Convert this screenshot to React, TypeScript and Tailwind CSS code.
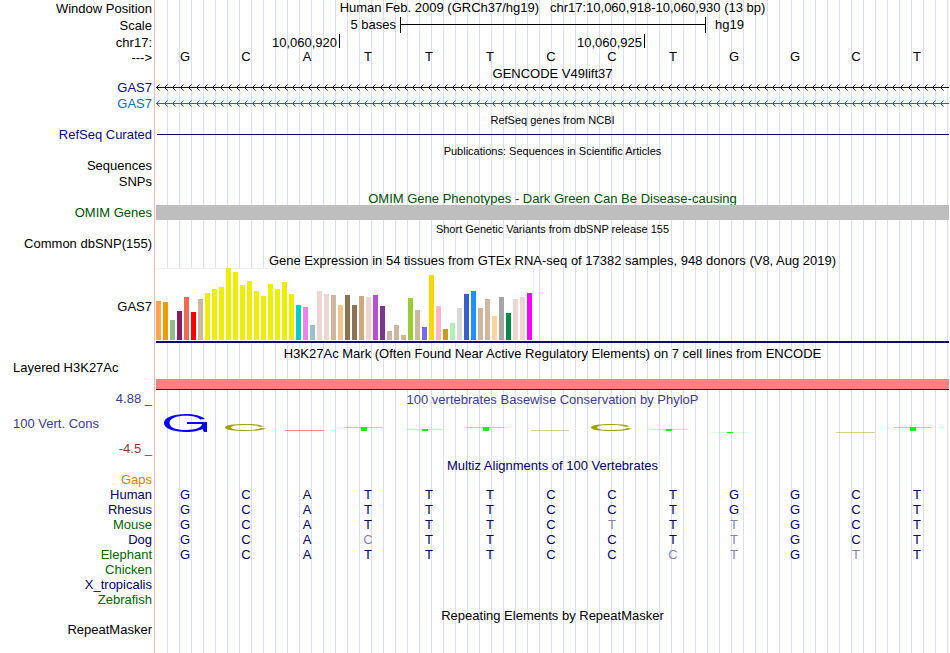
import React from "react";

type Children = { children?: React.ReactNode };

const TRACK_BG =
  "bg-[repeating-linear-gradient(to_right,transparent_0,transparent_11px,#dcdcff_11px,#dcdcff_12px)]";

function Row({
  label,
  labelClass = "",
  h,
  children,
}: Children & { label?: React.ReactNode; labelClass?: string; h: string }) {
  return (
    <div className={`flex ${h}`}>
      <div
        className={`w-[155px] shrink-0 border-r border-[#ffb4b4] pr-[2px] text-right whitespace-nowrap ${labelClass}`}
      >
        {label}
      </div>
      <div className={`mx-px min-w-0 flex-1 ${TRACK_BG}`}>{children}</div>
    </div>
  );
}

function Title({ children, className = "" }: Children & { className?: string }) {
  return <h2 className={`text-center whitespace-pre ${className}`}>{children}</h2>;
}

function Arrows({ id, color }: { id: string; color: string }) {
  return (
    <svg className="block h-4 w-full" shapeRendering="crispEdges" aria-hidden="true">
      <defs>
        <pattern id={id} width="8" height="16" patternUnits="userSpaceOnUse">
          <rect x="0" y="7" width="8" height="1" fill={color} />
          <rect x="1" y="6" width="1" height="1" fill={color} />
          <rect x="1" y="8" width="1" height="1" fill={color} />
          <rect x="2" y="5" width="1" height="1" fill={color} />
          <rect x="2" y="9" width="1" height="1" fill={color} />
          <rect x="3" y="4" width="1" height="1" fill={color} opacity="0.6" />
          <rect x="3" y="10" width="1" height="1" fill={color} opacity="0.6" />
        </pattern>
      </defs>
      <rect width="100%" height="16" fill={`url(#${id})`} />
    </svg>
  );
}

function Bases({ seq }: { seq: string }) {
  return (
    <div className="grid grid-cols-[repeat(13,minmax(0,1fr))] text-center">
      {seq.split("").map((c, i) => (
        <span
          key={i}
          className={`pr-[3px] ${c === c.toLowerCase() ? "text-[#8484b4]" : ""}`}
        >
          {c.toUpperCase()}
        </span>
      ))}
    </div>
  );
}

const TAN = "#cdb79e";
const PINK = "#eed5d2";
const YELLOW = "#eeee00";

const tissues: [number, string][] = [
  [39, "#ffa54f"], [38, "#ee9a00"], [20, "#8fbc8f"], [29, "#8b1c62"], [43, "#ee6a50"],
  [28, "#ff0000"], [41, TAN], [47, YELLOW], [51, YELLOW], [53, YELLOW], [72, YELLOW],
  [68, YELLOW], [55, YELLOW], [59, YELLOW], [49, YELLOW], [44, YELLOW], [56, YELLOW],
  [51, YELLOW], [58, YELLOW], [46, YELLOW], [35, "#00cdcd"], [33, "#ee82ee"],
  [15, "#9ac0cd"], [49, PINK], [46, PINK], [45, TAN], [35, "#eec591"], [45, "#8b7355"],
  [35, "#8b7355"], [44, "#cdaa7d"], [43, PINK], [45, "#b452cd"], [34, "#7a378b"],
  [9, TAN], [15, TAN], [5, TAN], [42, "#9acd32"], [30, TAN], [13, "#7a67ee"],
  [65, "#ffd700"], [34, "#ffb6c1"], [11, "#cd9b1d"], [17, "#b4eeb4"], [32, "#d9d9d9"],
  [46, "#3a5fcd"], [49, "#1e90ff"], [32, TAN], [41, TAN], [24, "#ffd39b"],
  [43, "#a6a6a6"], [27, "#008b45"], [41, PINK], [43, PINK], [47, "#ff00ff"],
];

function TissueChart() {
  return (
    <div className="border-b-2 border-[#0c0c78]">
      <div className="flex h-[73px] w-[378px] items-end gap-[2px] border-t border-r border-[#f0f0f0] bg-white pb-px">
        {tissues.map(([value, color], i) => (
          <div
            key={i}
            className="w-[5px] shrink-0"
            style={{ height: value, backgroundColor: color }}
          />
        ))}
      </div>
    </div>
  );
}

function OliveMark({ x }: { x: number }) {
  return (
    <path
      transform={`translate(${x} 0)`}
      fill="#a0a000"
      d="M39 20.5 C35 18.7 29 18 21 18 C9 18 0 19 0 21.5 C0 24 9 25 21 25 C29 25 37 24.3 41 22.5 L36 22 C34 23.3 28 24 21 24 C12 24 6 23.2 6 21.5 C6 19.8 12 19 21 19 C28 19 32 19.5 34 20.8 Z"
    />
  );
}

function GreenMark({ x, top, h, fade }: { x: number; top: number; h: number; fade: number }) {
  return (
    <g fill="#00ff00" shapeRendering="crispEdges">
      <rect x={x} y={top} width="37" height="1" opacity={fade} />
      <rect x={x + 16} y={top} width="6" height={h} />
    </g>
  );
}

function Conservation() {
  return (
    <svg
      className="block h-9 w-full"
      viewBox="0 0 793 36"
      preserveAspectRatio="none"
      role="img"
      aria-label="Basewise conservation"
    >
      <path
        fill="#0000ff"
        d="M49 13 C45 9.5 38 8 30 8 C17 8 8 11.5 8 17 C8 22.5 17 26 30 26 C38 26 44 24.5 46.5 23 L48 26 H51 V16 H31 V18 H46 C46 21 40 24 30 24 C20 24 13.5 21.5 13.5 17 C13.5 12.5 20 9.8 30 9.8 C37 9.8 42 11 44 13.5 Z"
      />
      <OliveMark x={69} />
      <rect x="129" y="24" width="39" height="1" fill="#ff0000" opacity="0.45" />
      <GreenMark x={189} top={21} h={4} fade={0.5} />
      <GreenMark x={250} top={23} h={2} fade={0.25} />
      <GreenMark x={311} top={21} h={4} fade={0.5} />
      <rect x="375" y="24" width="38" height="1" fill="#a0a000" opacity="0.45" />
      <OliveMark x={435} />
      <GreenMark x={494} top={23} h={2} fade={0.25} />
      <GreenMark x={555} top={26} h={1} fade={0.15} />
      <rect x="680" y="26" width="39" height="1" fill="#a0a000" opacity="0.45" />
      <GreenMark x={738} top={21} h={4} fade={0.5} />
    </svg>
  );
}

const species = [
  { name: "Human", color: "text-[#000064]", seq: "GCATTTCCTGGCT" },
  { name: "Rhesus", color: "text-[#000064]", seq: "GCATTTCCTGGCT" },
  { name: "Mouse", color: "text-[#006400]", seq: "GCATTTCtTtGCT" },
  { name: "Dog", color: "text-[#000064]", seq: "GCAcTTCCTtGCT" },
  { name: "Elephant", color: "text-[#006400]", seq: "GCATTTCCctGtT" },
  { name: "Chicken", color: "text-[#006400]", seq: "" },
  { name: "X_tropicalis", color: "text-[#000064]", seq: "" },
  { name: "Zebrafish", color: "text-[#006400]", seq: "" },
];

export default function App() {
  return (
    <main className="flex min-h-screen flex-col bg-white font-['Liberation_Sans',Arial,sans-serif] text-[13px] leading-4 text-black">
      <Row h="h-[17px]" label="Window Position" labelClass="pt-px">
        <Title>{"Human Feb. 2009 (GRCh37/hg19)   chr17:10,060,918-10,060,930 (13 bp)"}</Title>
      </Row>
      <Row h="h-[17px]" label="Scale" labelClass="pt-px">
        <div className="grid grid-cols-[repeat(13,minmax(0,1fr))]">
          <span className="col-span-4 pr-1 text-right">5 bases</span>
          <div className="col-span-5 -mr-px h-4 border-x border-black">
            <div className="h-2 border-b border-black" />
          </div>
          <span className="col-span-4 pl-[10px]">hg19</span>
        </div>
      </Row>
      <Row h="h-[15px]" label="chr17:" labelClass="pt-px">
        <div className="grid grid-cols-[repeat(13,minmax(0,1fr))]">
          <span className="col-span-3 pt-px pr-[2px] text-right">10,060,920</span>
          <div className="col-span-5 flex h-[14px] justify-end border-l border-black pt-px pr-[2px]">
            10,060,925
          </div>
          <div className="col-span-5 h-[14px] border-l border-black" />
        </div>
      </Row>
      <Row h="h-[17px]" label="--->" labelClass="pt-px">
        <Bases seq="GCATTTCCTGGCT" />
      </Row>
      <Row h="h-[14px]">
        <Title>GENCODE V49lift37</Title>
      </Row>
      <Row h="h-4" label="GAS7" labelClass="text-[#0c0c78]">
        <Arrows id="arrows-navy" color="#0c0c78" />
      </Row>
      <Row h="h-4" label="GAS7" labelClass="text-[#0c6eb4]">
        <Arrows id="arrows-blue" color="#0c6eb4" />
      </Row>
      <Row h="h-[15px]">
        <Title className="text-[11px]">RefSeq genes from NCBI</Title>
      </Row>
      <Row h="h-4" label="RefSeq Curated" labelClass="text-[#0c0c78]">
        <div className="ml-px h-2 border-b border-[#0c0c78]" />
      </Row>
      <Row h="h-[15px]">
        <Title className="text-[11px]">Publications: Sequences in Scientific Articles</Title>
      </Row>
      <Row h="h-4" label="Sequences" />
      <Row h="h-4" label="SNPs" />
      <Row h="h-[15px]">
        <Title className="pt-px text-[#005000]">
          OMIM Gene Phenotypes - Dark Green Can Be Disease-causing
        </Title>
      </Row>
      <Row h="h-[15px]" label="OMIM Genes" labelClass="text-[#005000]">
        <div className="h-full bg-[#bebebe]" />
      </Row>
      <Row h="h-4">
        <Title className="pt-px text-[11px]">Short Genetic Variants from dbSNP release 155</Title>
      </Row>
      <Row h="h-4" label="Common dbSNP(155)" />
      <Row h="h-4">
        <Title className="pt-px">
          Gene Expression in 54 tissues from GTEx RNA-seq of 17382 samples, 948 donors (V8, Aug 2019)
        </Title>
      </Row>
      <Row h="h-[77px]" label="GAS7" labelClass="pt-[31px]">
        <TissueChart />
      </Row>
      <Row h="h-[15px]">
        <Title className="pt-px">
          H3K27Ac Mark (Often Found Near Active Regulatory Elements) on 7 cell lines from ENCODE
        </Title>
      </Row>
      <Row
        h="h-[31px]"
        label={<span className="block pl-[13px] text-left">Layered H3K27Ac</span>}
      >
        <div className="pt-[19px]">
          <div className="h-[11px] border-b border-[#402020] bg-[#ff8080]" />
        </div>
      </Row>
      <Row h="h-[15px]" label="4.88 _" labelClass="text-[#3c3c8c]">
        <Title className="pt-px text-[#3c3c8c]">
          100 vertebrates Basewise Conservation by PhyloP
        </Title>
      </Row>
      <Row
        h="h-[35px]"
        label={<span className="block pl-[13px] text-left">100 Vert. Cons</span>}
        labelClass="pt-[10px] text-[#3c3c8c]"
      >
        <Conservation />
      </Row>
      <Row h="h-[17px]" label="-4.5 _" labelClass="text-[#8c3c3c]" />
      <Row h="h-[14px]">
        <Title className="text-[#000064]">Multiz Alignments of 100 Vertebrates</Title>
      </Row>
      <Row h="h-[15px]" label="Gaps" labelClass="text-[#dc8200]" />
      {species.map((s) => (
        <Row key={s.name} h="h-[15px]" label={s.name} labelClass={s.color}>
          <div className="text-[#000064]">
            <Bases seq={s.seq} />
          </div>
        </Row>
      ))}
      <Row h="h-[15px]">
        <Title className="pt-px">Repeating Elements by RepeatMasker</Title>
      </Row>
      <Row h="grow" label="RepeatMasker" />
    </main>
  );
}
